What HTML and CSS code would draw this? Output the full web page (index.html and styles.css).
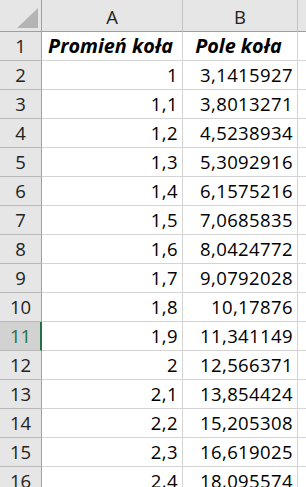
FILE: index.html
```html
<!DOCTYPE html>
<html lang="pl">
<head>
<meta charset="utf-8">
<link rel="stylesheet" href="styles.css">
</head>
<body>
<div class="sheet">
  <div class="corner"><span class="tri"></span></div>
  <div class="colhead">A</div>
  <div class="colhead">B</div>
  <div class="colhead last"></div>

  <div class="rowhead">1</div><div class="cell title">Promień koła</div><div class="cell title">Pole koła</div><div class="cell c"></div>
  <div class="rowhead">2</div><div class="cell num">1</div><div class="cell num">3,1415927</div><div class="cell c"></div>
  <div class="rowhead">3</div><div class="cell num">1,1</div><div class="cell num">3,8013271</div><div class="cell c"></div>
  <div class="rowhead">4</div><div class="cell num">1,2</div><div class="cell num">4,5238934</div><div class="cell c"></div>
  <div class="rowhead">5</div><div class="cell num">1,3</div><div class="cell num">5,3092916</div><div class="cell c"></div>
  <div class="rowhead">6</div><div class="cell num">1,4</div><div class="cell num">6,1575216</div><div class="cell c"></div>
  <div class="rowhead">7</div><div class="cell num">1,5</div><div class="cell num">7,0685835</div><div class="cell c"></div>
  <div class="rowhead">8</div><div class="cell num">1,6</div><div class="cell num">8,0424772</div><div class="cell c"></div>
  <div class="rowhead">9</div><div class="cell num">1,7</div><div class="cell num">9,0792028</div><div class="cell c"></div>
  <div class="rowhead">10</div><div class="cell num">1,8</div><div class="cell num">10,17876</div><div class="cell c"></div>
  <div class="rowhead selected">11</div><div class="cell num">1,9</div><div class="cell num">11,341149</div><div class="cell c"></div>
  <div class="rowhead">12</div><div class="cell num">2</div><div class="cell num">12,566371</div><div class="cell c"></div>
  <div class="rowhead">13</div><div class="cell num">2,1</div><div class="cell num">13,854424</div><div class="cell c"></div>
  <div class="rowhead">14</div><div class="cell num">2,2</div><div class="cell num">15,205308</div><div class="cell c"></div>
  <div class="rowhead">15</div><div class="cell num">2,3</div><div class="cell num">16,619025</div><div class="cell c"></div>
  <div class="rowhead">16</div><div class="cell num">2,4</div><div class="cell num">18,095574</div><div class="cell c"></div>
</div>
</body>
</html>
```
FILE: styles.css
```css
html, body {
  margin: 0;
  padding: 0;
  background: #ffffff;
  overflow: hidden;
}
.sheet {
  display: grid;
  grid-template-columns: 42px 141px 115px 1fr;
  grid-template-rows: 32px repeat(16, 29px);
  width: 306px;
  height: 487px;
  overflow: hidden;
  font-family: "Open Sans", "Noto Sans", sans-serif;
  font-size: 18.5px;
  color: #000;
}
.sheet > div {
  box-sizing: border-box;
  white-space: nowrap;
  overflow: hidden;
}
.corner {
  position: relative;
  background: #e6e6e6;
  border-right: 1px solid #9f9f9f;
  border-bottom: 1px solid #9f9f9f;
}
.tri {
  position: absolute;
  left: 17px;
  top: 8px;
  width: 21px;
  height: 20px;
  background: #b4b4b4;
  clip-path: polygon(100% 0, 100% 100%, 0 100%);
}
.colhead {
  background: #e6e6e6;
  border-bottom: 1px solid #9f9f9f;
  border-right: 1px solid #c4c4c4;
  text-align: center;
  line-height: 28px;
  padding-top: 3px;
  color: #222;
}
.colhead.last {
  border-right: none;
}
.rowhead {
  background: #e6e6e6;
  border-right: 1px solid #9f9f9f;
  border-bottom: 1px solid #b9b9b9;
  text-align: center;
  line-height: 28px;
  color: #222;
}
.rowhead.selected {
  background: #d2d2d2;
  color: #217346;
  border-right: 2px solid #217346;
  padding-left: 1px;
}
.cell {
  border-right: 1px solid #d4d4d4;
  border-bottom: 1px solid #d4d4d4;
  line-height: 28px;
}
.cell.c {
  border-right: none;
}
.num {
  text-align: right;
  padding-right: 4px;
  letter-spacing: 0.4px;
}
.title {
  font-weight: bold;
  font-style: italic;
  text-align: center;
  font-size: 19.8px;
  padding-right: 3px;
}
```
